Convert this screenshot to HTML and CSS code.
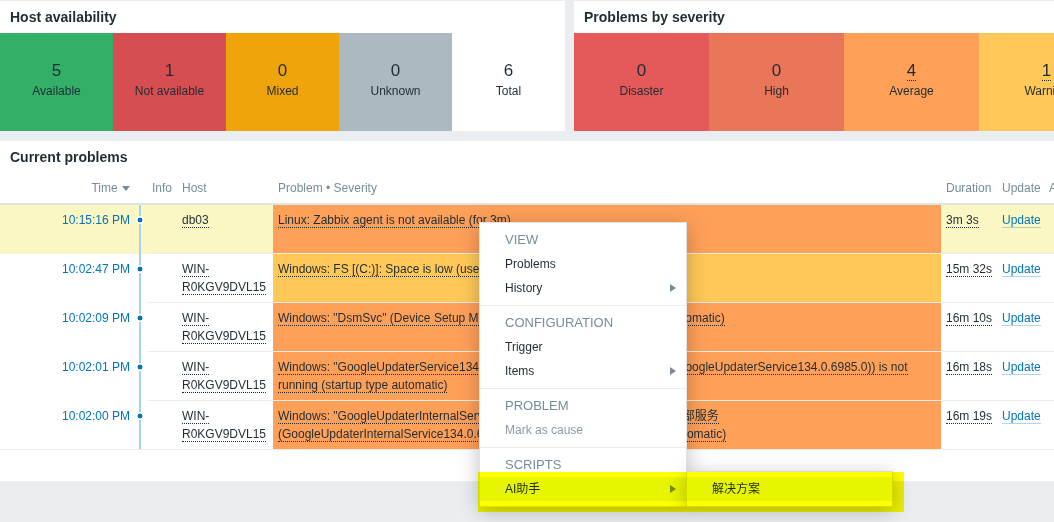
FILE: index.html
```html
<!DOCTYPE html>
<html lang="en">
<head>
    <meta charset="UTF-8">
    <meta name="viewport" content="width=device-width, initial-scale=1.0">
    <title>Dashboard</title>
    <link rel="stylesheet" href="styles.css">
</head>
<body>
    <div class="dashboard">
        <div class="widget-row">
            <section class="widget host-avail">
                <h4 class="widget-head">Host availability</h4>
                <div class="totals">
                    <div class="total available"><span class="count">5</span><span class="name">Available</span></div>
                    <div class="total not-available"><span class="count">1</span><span class="name">Not available</span></div>
                    <div class="total mixed"><span class="count">0</span><span class="name">Mixed</span></div>
                    <div class="total unknown"><span class="count">0</span><span class="name">Unknown</span></div>
                    <div class="total all"><span class="count">6</span><span class="name">Total</span></div>
                </div>
            </section>

            <section class="widget by-severity">
                <h4 class="widget-head">Problems by severity</h4>
                <div class="totals">
                    <div class="total disaster"><span class="count">0</span><span class="name">Disaster</span></div>
                    <div class="total high"><span class="count">0</span><span class="name">High</span></div>
                    <div class="total average"><span class="count"><a class="link-action">4</a></span><span class="name">Average</span></div>
                    <div class="total warning"><span class="count"><a class="link-action">1</a></span><span class="name">Warning</span></div>
                    <div class="total info"><span class="count">0</span><span class="name">Information</span></div>
                    <div class="total not-classified"><span class="count">0</span><span class="name">Not classified</span></div>
                </div>
            </section>
        </div>

        <section class="widget current-problems">
            <h4 class="widget-head">Current problems</h4>
            <table class="problems">
                <colgroup>
                    <col style="width: 135px">
                    <col style="width: 12px">
                    <col style="width: 30px">
                    <col style="width: 96px">
                    <col style="width: 668px">
                    <col style="width: 56px">
                    <col style="width: 47px">
                    <col style="width: 120px">
                </colgroup>
                <thead>
                    <tr>
                        <th class="col-time">Time <span class="sort-down"></span></th>
                        <th></th>
                        <th>Info</th>
                        <th>Host</th>
                        <th>Problem &bull; Severity</th>
                        <th>Duration</th>
                        <th>Update</th>
                        <th>Actions</th>
                    </tr>
                </thead>
                <tbody>
                    <tr class="row-new">
                        <td class="time">10:15:16 PM</td>
                        <td class="timeline"></td>
                        <td></td>
                        <td><a class="link-action">db03</a></td>
                        <td class="sev average"><a class="link-action">Linux: Zabbix agent is not available (for 3m)</a></td>
                        <td class="nowrap"><a class="link-action">3m 3s</a></td>
                        <td><a class="link-update">Update</a></td>
                        <td></td>
                    </tr>
                    <tr>
                        <td class="time">10:02:47 PM</td>
                        <td class="timeline"></td>
                        <td></td>
                        <td><a class="link-action">WIN-R0KGV9DVL15</a></td>
                        <td class="sev warning"><a class="link-action">Windows: FS [(C:)]: Space is low (used &gt; 80%, total 60GB)</a></td>
                        <td class="nowrap"><a class="link-action">15m 32s</a></td>
                        <td><a class="link-update">Update</a></td>
                        <td></td>
                    </tr>
                    <tr>
                        <td class="time">10:02:09 PM</td>
                        <td class="timeline"></td>
                        <td></td>
                        <td><a class="link-action">WIN-R0KGV9DVL15</a></td>
                        <td class="sev average"><a class="link-action">Windows: "DsmSvc" (Device Setup Manager) is not running (startup type automatic)</a></td>
                        <td class="nowrap"><a class="link-action">16m 10s</a></td>
                        <td><a class="link-update">Update</a></td>
                        <td></td>
                    </tr>
                    <tr>
                        <td class="time">10:02:01 PM</td>
                        <td class="timeline"></td>
                        <td></td>
                        <td><a class="link-action">WIN-R0KGV9DVL15</a></td>
                        <td class="sev average"><a class="link-action">Windows: "GoogleUpdaterService134.0.6985.0" (Google Updater Service (GoogleUpdaterService134.0.6985.0)) is not running (startup type automatic)</a></td>
                        <td class="nowrap"><a class="link-action">16m 18s</a></td>
                        <td><a class="link-update">Update</a></td>
                        <td></td>
                    </tr>
                    <tr class="row-last">
                        <td class="time">10:02:00 PM</td>
                        <td class="timeline"></td>
                        <td></td>
                        <td><a class="link-action">WIN-R0KGV9DVL15</a></td>
                        <td class="sev average"><a class="link-action">Windows: "GoogleUpdaterInternalService134.0.6985.0" (Google 更新程序内部服务 (GoogleUpdaterInternalService134.0.6985.0)) is not running (startup type automatic)</a></td>
                        <td class="nowrap"><a class="link-action">16m 19s</a></td>
                        <td><a class="link-update">Update</a></td>
                        <td></td>
                    </tr>
                </tbody>
            </table>
        </section>
    </div>

    <!-- context menu for the selected event -->
    <div class="menu-popup">
        <div class="menu-section">
            <h3>View</h3>
            <a class="menu-item">Problems</a>
            <a class="menu-item has-sub">History</a>
        </div>
        <div class="menu-section">
            <h3>Configuration</h3>
            <a class="menu-item">Trigger</a>
            <a class="menu-item has-sub">Items</a>
        </div>
        <div class="menu-section">
            <h3>Problem</h3>
            <a class="menu-item disabled">Mark as cause</a>
        </div>
        <div class="menu-section">
            <h3>Scripts</h3>
            <a class="menu-item has-sub hover">AI助手</a>
        </div>
    </div>

    <div class="menu-popup submenu">
        <div class="menu-section">
            <a class="menu-item hover">解决方案</a>
        </div>
    </div>

    <!-- yellow marker over the script entry -->
    <div class="hl-mark"></div>
</body>
</html>
```

FILE: styles.css
```css
* {
    margin: 0;
    padding: 0;
    box-sizing: border-box;
}

html,
body {
    overflow: hidden;
}

body {
    width: 1054px;
    height: 522px;
    background: #ebeef0;
    font-family: "Liberation Sans", Arial, "Noto Sans CJK SC", sans-serif;
    font-size: 12px;
    line-height: 18px;
    color: #1f2c33;
}

.dashboard {
    width: 1400px;
    padding-top: 1px;
}

.widget-row {
    display: flex;
    gap: 9px;
}

.widget {
    background: #fff;
}

.widget-head {
    height: 32px;
    padding: 0 10px;
    font-size: 14px;
    font-weight: bold;
    line-height: 32px;
    color: #1f2c33;
}

/* Totals tiles */
.host-avail {
    width: 565px;
}

.by-severity {
    width: 810px;
}

.totals {
    display: grid;
    height: 98px;
}

.host-avail .totals {
    grid-template-columns: repeat(5, 113px);
}

.by-severity .totals {
    grid-template-columns: repeat(6, 135px);
}

.total {
    display: flex;
    flex-direction: column;
    align-items: center;
    justify-content: center;
    padding-bottom: 2px;
}

.total .count {
    font-size: 17px;
    line-height: 20px;
}

.total .name {
    line-height: 20px;
}

.available { background: #34af67; }
.not-available { background: #d64e52; }
.mixed { background: #f0a40c; }
.unknown { background: #acb9c0; }
.all { background: #fff; }

.disaster { background: #e45959; }
.high { background: #e97659; }
.average { background: #ffa059; }
.warning { background: #ffc859; }
.info { background: #7499ff; }
.not-classified { background: #97aab3; }

.link-action {
    color: inherit;
    text-decoration: none;
    border-bottom: 1px dotted #1f2c33;
}

.link-update {
    color: #0275b8;
    text-decoration: none;
    border-bottom: 1px solid rgba(2, 117, 184, 0.3);
}

/* Problems table */
.current-problems {
    width: 1400px;
    margin-top: 10px;
    padding-bottom: 31px;
}

.problems {
    width: 1164px;
    table-layout: fixed;
    border-collapse: separate;
    border-spacing: 0;
}

.problems th {
    padding: 6px 5px 6px;
    font-weight: normal;
    text-align: left;
    color: #768d99;
    border-bottom: 2px solid #dfe4e7;
    white-space: nowrap;
}

.problems th.col-time {
    text-align: right;
}

.sort-down {
    display: inline-block;
    margin-left: 1px;
    vertical-align: middle;
    border-left: 4px solid transparent;
    border-right: 4px solid transparent;
    border-top: 5px solid #768d99;
}

.problems tbody tr {
    height: 49px;
}

.problems td {
    padding: 6px 5px 0;
    vertical-align: top;
    border-bottom: 1px solid #ebeef0;
}

.problems td.nowrap {
    white-space: nowrap;
}

.problems td.time {
    text-align: right;
    color: #0275b8;
    border-bottom: none;
}

.problems td.timeline {
    padding: 0;
    border-bottom: none;
    background-image:
        radial-gradient(circle at 5px 15px, #0275b8 2.2px, #fff 2.7px, #fff 3.6px, transparent 4.1px),
        linear-gradient(to right, transparent 4px, #a6d1ef 4px, #a6d1ef 6px, transparent 6px);
    background-repeat: no-repeat;
}

.problems .row-last td {
    border-bottom: 1px solid #ebeef0;
}

.row-new td {
    background-color: #fbf7c5;
}

.row-new td.sev {
    background-color: #ffa059;
}

.problems td.sev {
    border-bottom-color: #f3ede4;
}

/* Context menu */
.menu-popup {
    position: absolute;
    left: 479px;
    top: 222px;
    width: 208px;
    background: #fff;
    border: 1px solid #dfe4e7;
    box-shadow: 0 4px 20px rgba(0, 0, 0, 0.25);
}

.menu-popup.submenu {
    left: 686px;
    top: 471px;
    width: 207px;
    border-color: #d5dadd;
}

.menu-section {
    padding: 5px 0;
}

.menu-section + .menu-section {
    border-top: 1px solid #ebeef0;
}

.menu-section h3 {
    padding-left: 25px;
    font-size: 13px;
    font-weight: normal;
    line-height: 24px;
    text-transform: uppercase;
    color: #768d99;
}

.menu-item {
    display: flex;
    justify-content: space-between;
    align-items: center;
    height: 24px;
    padding: 0 10px 0 25px;
    color: #1f2c33;
}

.menu-item.has-sub::after {
    content: "";
    border-top: 4px solid transparent;
    border-bottom: 4px solid transparent;
    border-left: 6px solid #768d99;
}

.menu-item.disabled {
    color: #8a9aa4;
}

.menu-item.hover {
    background: #e8f5ff;
}

.hl-mark {
    position: absolute;
    left: 478px;
    top: 472px;
    width: 426px;
    height: 40px;
    background: #ffff00;
    mix-blend-mode: multiply;
}
```
